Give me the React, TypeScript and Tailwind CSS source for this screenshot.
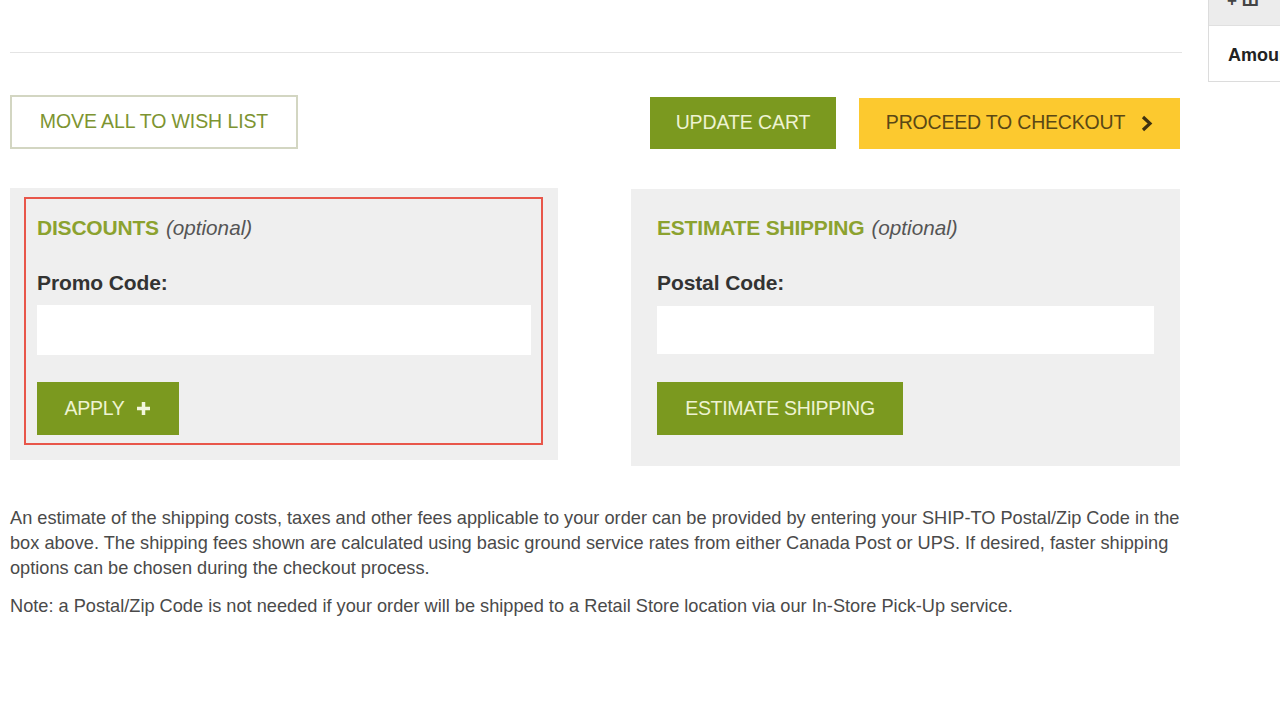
import React from 'react';

const olive = "bg-[#7b991f]";

const App: React.FunctionComponent = () => {
    return (
        <div className="w-[1280px] h-[719px] overflow-hidden bg-white flex font-['Liberation_Sans',Arial,sans-serif]">
            <div className="ml-[10px] w-[1172px] shrink-0">
                <div className="h-[53px] border-b border-[#e4e4e4]"></div>

                <div className="w-[1170px] flex items-start mt-[42px]">
                    <button className="h-[54px] w-[288px] border-2 border-[#d3d6c2] text-[#7d9431] text-[19.5px] tracking-[-0.1px] uppercase">
                        Move All To Wish List
                    </button>
                    <div className="ml-auto flex items-center gap-[23px] mt-[2px]">
                        <button className={`h-[52px] w-[186px] ${olive} text-[#eef3d2] text-[19.5px] tracking-[-0.1px] uppercase`}>
                            Update Cart
                        </button>
                        <button className="h-[51px] w-[321px] bg-[#fcc92f] text-[#5a4715] text-[19.5px] tracking-[-0.2px] uppercase flex items-center justify-center gap-[15px]">
                            Proceed To Checkout
                            <svg width="13" height="17" viewBox="0 0 13 17" fill="none">
                                <path d="M3 2 L10 8.5 L3 15" stroke="#3f3210" strokeWidth="3.2" />
                            </svg>
                        </button>
                    </div>
                </div>

                <div className="w-[1170px] flex items-start mt-[39px]">
                    <div className="w-[548px] h-[272px] bg-[#efefef] pt-[9px] pl-[14px]">
                        <div className="w-[519px] h-[248px] border-2 border-[#e8564a] pl-[11px] pr-[10px] pt-[17px]">
                            <div className="flex items-baseline leading-[24px]">
                                <span className="text-[21px] font-bold text-[#8ca22f] tracking-[-0.2px]">DISCOUNTS</span>
                                <span className="ml-[7px] text-[20.7px] italic text-[#555]">(optional)</span>
                            </div>
                            <div className="mt-[31px] leading-[24px] text-[21px] font-bold text-[#333] tracking-[-0.1px]">Promo Code:</div>
                            <input className="mt-[10px] block w-full h-[50px] bg-white outline-none" type="text" />
                            <button className={`mt-[27px] h-[53px] w-[142px] ${olive} text-[#eef3d2] text-[19.5px] tracking-[-0.3px] flex items-center justify-center gap-[12px]`}>
                                APPLY
                                <svg width="15" height="15" viewBox="0 0 15 15">
                                    <path d="M7.5 1 V14 M1 7.5 H14" stroke="#f2f6dc" strokeWidth="3.5" />
                                </svg>
                            </button>
                        </div>
                    </div>

                    <div className="ml-auto mt-[1px] w-[549px] h-[277px] bg-[#efefef] px-[26px] pt-[27px]">
                        <div className="flex items-baseline leading-[24px]">
                            <span className="text-[21px] font-bold text-[#8ca22f] tracking-[-0.2px]">ESTIMATE SHIPPING</span>
                            <span className="ml-[7px] text-[20.7px] italic text-[#555]">(optional)</span>
                        </div>
                        <div className="mt-[31px] leading-[24px] text-[21px] font-bold text-[#333] tracking-[-0.1px]">Postal Code:</div>
                        <input className="mt-[11px] block w-full h-[48px] bg-white outline-none" type="text" />
                        <button className={`mt-[28px] h-[53px] w-[246px] ${olive} text-[#eef3d2] text-[19.5px] tracking-[-0.3px] uppercase`}>
                            Estimate Shipping
                        </button>
                    </div>
                </div>

                <div className="mt-[40px] text-[18.2px] leading-[25px] text-[#4a4a4a] whitespace-nowrap">
                    <p>
                        An estimate of the shipping costs, taxes and other fees applicable to your order can be provided by entering your SHIP-TO Postal/Zip Code in the<br />
                        box above. The shipping fees shown are calculated using basic ground service rates from either Canada Post or UPS. If desired, faster shipping<br />
                        options can be chosen during the checkout process.
                    </p>
                    <p className="mt-[13px]">
                        Note: a Postal/Zip Code is not needed if your order will be shipped to a Retail Store location via our In-Store Pick-Up service.
                    </p>
                </div>
            </div>

            <div className="ml-[26px] flex-1 min-w-0">
                <div className="h-[82px] border-l border-b border-[#dcdcdc] overflow-hidden">
                    <div className="h-[26px] bg-[#ececec] border-b border-[#e0e0e0] overflow-hidden pl-[18px]">
                        <div className="-mt-[12px] text-[17px] font-bold text-[#444] whitespace-nowrap">+ Ш</div>
                    </div>
                    <div className="pl-[19px] pt-[16px] text-[18px] font-bold text-[#222] whitespace-nowrap">Amount</div>
                </div>
            </div>
        </div>
    );
};

export default App;
